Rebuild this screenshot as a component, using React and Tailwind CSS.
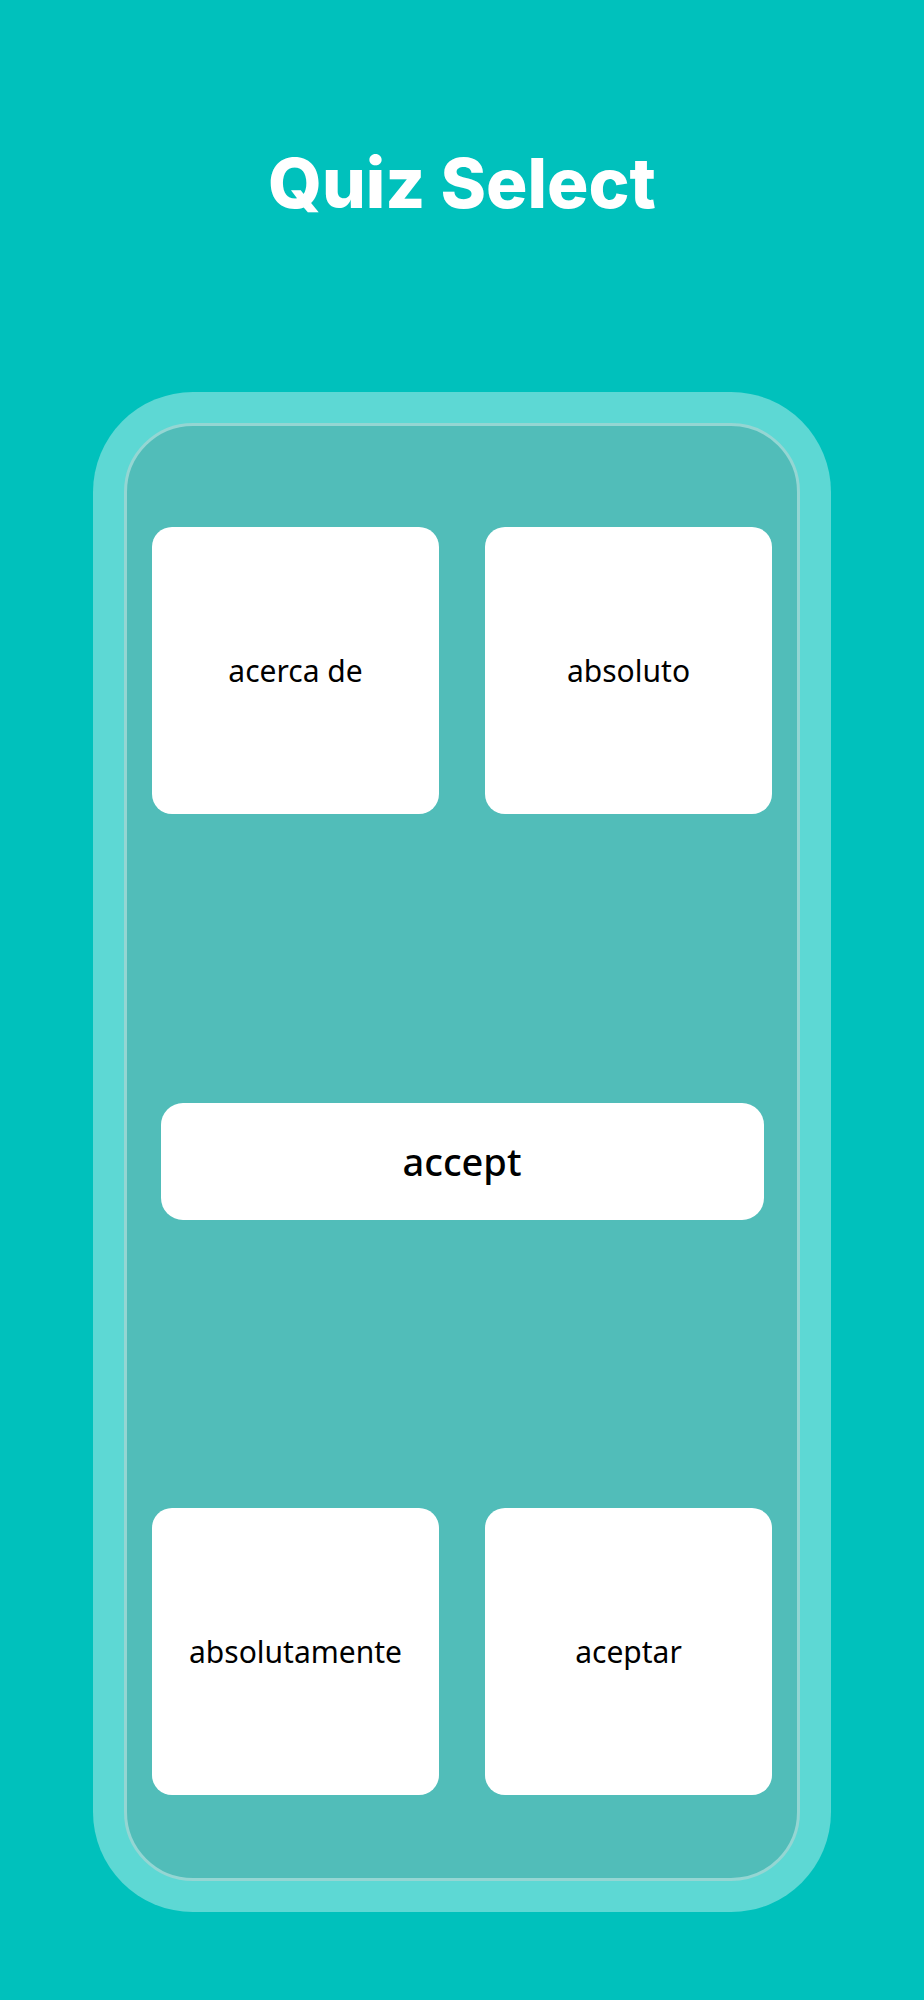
export default function App() {
  const card = "flex items-center justify-center bg-white rounded-[20px] h-[287px] text-black text-[30px] leading-none";
  return (
    <div className="w-[924px] h-[2000px] bg-[#00c1bc] flex flex-col items-center" style={{ fontFamily: '"Noto Sans", sans-serif' }}>
      <h1 className="mt-[149px] text-white text-[69px] font-extrabold leading-none" style={{ fontFamily: 'Inter, sans-serif' }}>
        Quiz Select
      </h1>
      <div className="mt-[174px] w-[738px] h-[1520px] rounded-[100px] bg-[#5dd8d4] p-[31px]">
        <div className="h-full rounded-[69px] border-[3px] border-[#94d6d3] bg-[#51bdb9] flex flex-col items-center justify-between pt-[101px] pb-[83px]">
          <div className="grid grid-cols-2 gap-[46px] w-[620px]">
            <div className={card}>acerca de</div>
            <div className={card}>absoluto</div>
          </div>
          <div className="w-[603px] h-[117px] rounded-[22px] bg-white flex items-center justify-center text-black text-[38px] font-medium leading-none">
            accept
          </div>
          <div className="grid grid-cols-2 gap-[46px] w-[620px]">
            <div className={card}>absolutamente</div>
            <div className={card}>aceptar</div>
          </div>
        </div>
      </div>
    </div>
  );
}
